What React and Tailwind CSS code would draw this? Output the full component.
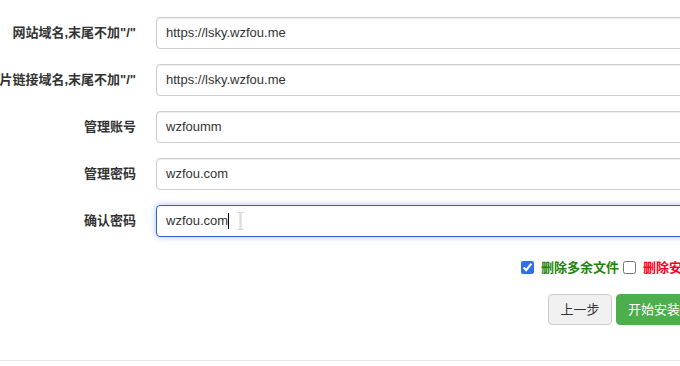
import React from 'react';

const rows = [
  { label: '网站域名,末尾不加"/"', value: 'https://lsky.wzfou.me' },
  { label: '图片链接域名,末尾不加"/"', value: 'https://lsky.wzfou.me' },
  { label: '管理账号', value: 'wzfoumm' },
  { label: '管理密码', value: 'wzfou.com' },
  { label: '确认密码', value: 'wzfou.com', focused: true },
];

const cjk = "font-['Liberation_Sans','Noto_Sans_CJK_SC',sans-serif]";

const FormRow = ({ label, value, focused }) => (
  <div className="flex items-center h-[32px]">
    <label className="w-[136px] shrink-0 text-right whitespace-nowrap text-[13px] font-bold text-[#333] flex justify-end overflow-visible">
      <span>{label}</span>
    </label>
    <div
      className={
        'ml-[20px] w-[600px] shrink-0 h-[32px] rounded-[4px] bg-white flex items-center pl-[9px] text-[13px] text-[#333] relative ' +
        (focused
          ? 'border border-[#2f62d6] shadow-[0_0_6px_rgba(60,110,230,0.45)]'
          : 'border border-[#cccccc] shadow-[inset_0_1px_1px_rgba(0,0,0,0.075)]')
      }
    >
      <span>{value}</span>
      {focused && (
        <>
          <span className="inline-block w-px h-[16px] bg-black" />
          <svg className="absolute left-[80px] top-[6px]" width="7" height="18" viewBox="0 0 7 18">
            <path d="M0.5 0.5h2.5v17H0.5M6.5 0.5H4v17h2.5" fill="none" stroke="#d0d0d0" strokeWidth="1" />
          </svg>
        </>
      )}
    </div>
  </div>
);

export default function App() {
  return (
    <div className={`w-[680px] h-[366px] overflow-hidden bg-white ${cjk}`}>
      <div className="pt-[17px] flex flex-col gap-[15px]">
        {rows.map((r) => (
          <FormRow key={r.label} {...r} />
        ))}
      </div>

      <div className="mt-[24px] pl-[521px] flex items-center h-[13px] whitespace-nowrap text-[13px] font-bold">
        <input type="checkbox" defaultChecked className="w-[13px] h-[13px] m-0 accent-[#2f6fe8]" />
        <span className="ml-[7px] text-[#23850a]">删除多余文件</span>
        <input type="checkbox" className="ml-[4px] w-[13px] h-[13px] m-0" />
        <span className="ml-[7px] text-[#ff0022]">删除安装文件</span>
      </div>

      <div className="mt-[20px] pl-[548px] flex gap-[4px] whitespace-nowrap text-[13px]">
        <button className="w-[64px] h-[31px] shrink-0 rounded-[4px] border border-[#ccc] bg-[#f0f0f0] text-[#333]">
          上一步
        </button>
        <button className="w-[88px] h-[31px] shrink-0 rounded-[4px] border border-[#4cae4c] bg-[#4cae4c] text-white text-left pl-[11px]">
          开始安装
        </button>
      </div>

      <div className="mt-[35px] border-t border-[#e5e5e5]" />
    </div>
  );
}
